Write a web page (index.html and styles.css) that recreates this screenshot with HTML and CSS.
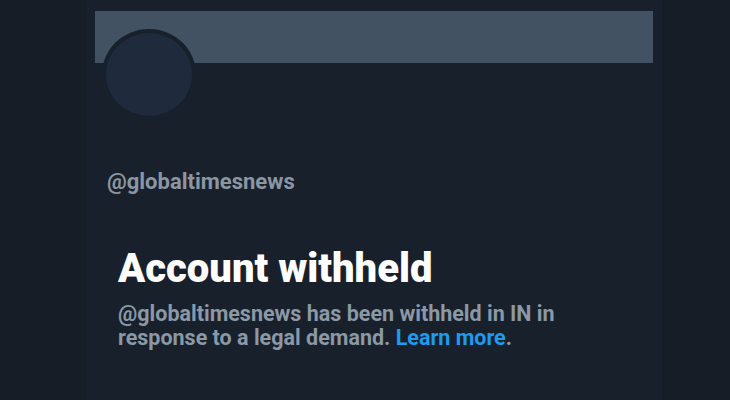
FILE: index.html
```html
<!DOCTYPE html>
<html lang="en">
  <head>
    <meta charset="UTF-8" />
    <meta name="viewport" content="width=device-width, initial-scale=1.0" />
    <title>@globaltimesnews</title>
    <link rel="stylesheet" href="styles.css">
  </head>
  <body>
    <div class="column">
      <div class="banner"></div>
      <div class="avatar"><div class="avatar-fill"></div></div>
      <div class="handle">@globaltimesnews</div>

      <div class="notice">
        <h1>Account withheld</h1>
        <p>
          @globaltimesnews has been withheld in IN in<br />
          response to a legal demand. <a href="#">Learn more</a>.
        </p>
      </div>
    </div>
  </body>
</html>
```

FILE: styles.css
```css
body {
  margin: 0;
  background: #171d27;
  font-family: Roboto, "Liberation Sans", Arial, sans-serif;
  height: 400px;
  overflow: hidden;
}
.column {
  margin-left: 87px;
  width: 575px;
  height: 400px;
  background: #18202b;
  padding-top: 11px;
  box-sizing: border-box;
}
.banner {
  margin-left: 8px;
  width: 558px;
  height: 52px;
  background: #425262;
}
.avatar {
  margin: -34px 0 0 15px;
  width: 94px;
  height: 91px;
  border-radius: 50%;
  background: #18202b;
  padding: 4px;
  box-sizing: border-box;
  position: relative;
}
.avatar-fill {
  width: 100%;
  height: 100%;
  border-radius: 50%;
  background: #1f2a3c;
}
.handle {
  margin: 49px 0 0 20px;
  color: #8b96a3;
  font-size: 22px;
  line-height: 26px;
  font-weight: 700;
}
.notice {
  margin: 51px 0 0 31px;
}
h1 {
  margin: 0;
  color: #ffffff;
  font-size: 40px;
  line-height: 46px;
  font-weight: 900;
}
p {
  margin: 10px 0 0;
  color: #8b98a5;
  font-size: 21.5px;
  font-weight: 700;
  line-height: 24px;
}
a {
  color: #1d9bf0;
  text-decoration: none;
}
```
